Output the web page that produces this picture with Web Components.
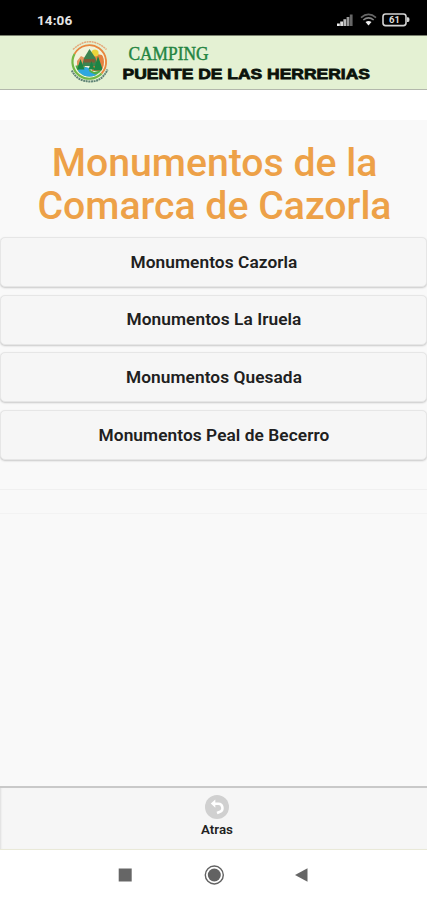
<!DOCTYPE html>
<html lang="es">
<head>
<meta charset="utf-8">
<meta name="viewport" content="width=device-width, initial-scale=1">
<title>Monumentos de la Comarca de Cazorla</title>
<style>
  html, body {
    margin: 0;
    height: 100%;
    background: #fff;
    font-family: Roboto, "Liberation Sans", sans-serif;
  }
</style>
</head>
<body>
<camping-app>
  <status-bar slot="top" time="14:06" battery="61"></status-bar>
  <brand-header slot="top"></brand-header>
  <page-title>Monumentos de la Comarca de Cazorla</page-title>
  <menu-list>
    <menu-button>Monumentos Cazorla</menu-button>
    <menu-button>Monumentos La Iruela</menu-button>
    <menu-button>Monumentos Quesada</menu-button>
    <menu-button>Monumentos Peal de Becerro</menu-button>
  </menu-list>
  <back-bar slot="bottom">Atras</back-bar>
  <system-nav slot="bottom"></system-nav>
</camping-app>

<script>
class CampingApp extends HTMLElement {
  constructor() {
    super();
    this.attachShadow({ mode: 'open' });
    this.shadowRoot.innerHTML = `
      <style>
        :host {
          display: flex;
          flex-direction: column;
          height: 100vh;
          overflow: hidden;
        }
        main {
          flex: 1;
          margin-top: 30px;
          background: #f9f9f9;
        }
        .strip {
          height: 23px;
          margin-top: 29px;
          border-top: 1px solid #f0f0f0;
          border-bottom: 1px solid #f3f3f3;
        }
      </style>
      <slot name="top"></slot>
      <main>
        <slot></slot>
        <div class="strip"></div>
      </main>
      <slot name="bottom"></slot>
    `;
  }
}

class StatusBar extends HTMLElement {
  connectedCallback() {
    this.attachShadow({ mode: 'open' });
    this.shadowRoot.innerHTML = `
      <style>
        :host {
          display: flex;
          justify-content: space-between;
          align-items: center;
          flex: none;
          box-sizing: border-box;
          height: 35px;
          padding: 4px 17px 0 37px;
          background: #000;
          color: #e4e4e4;
        }
        .time {
          font-size: 13.5px;
          font-weight: 700;
          letter-spacing: 0.1px;
        }
        .icons {
          display: flex;
          align-items: center;
        }
        .signal { margin-right: 7px; }
        .wifi { margin-right: 5px; }
      </style>
      <span class="time">${this.getAttribute('time')}</span>
      <div class="icons">
        <svg class="signal" width="16" height="12" viewBox="0 0 16 12">
          <path d="M0 9.5h2.8V12H0z" fill="#eee"/>
          <path d="M3.2 7.5H6V12H3.2z" fill="#ddd"/>
          <path d="M6.4 5.2h2.8V12H6.4z" fill="#bbb"/>
          <path d="M9.6 3h2.8v9H9.6z" fill="#999"/>
          <path d="M12.8.5h2.8V12h-2.8z" fill="#666"/>
        </svg>
        <svg class="wifi" width="17" height="13" viewBox="0 0 17 13" fill="none">
          <path d="M1 4.6Q8.5-1.8 16 4.6" stroke="#666" stroke-width="1.7"/>
          <path d="M3.3 7Q8.5 2.7 13.7 7" stroke="#858585" stroke-width="1.6"/>
          <path d="M5.5 9.1Q8.5 6.7 11.5 9.1L8.5 12.5z" fill="#eee"/>
        </svg>
        <svg width="28" height="14" viewBox="0 0 28 14">
          <rect x="1" y="1" width="23" height="11.6" rx="2.6" fill="none" stroke="#d4d4d4" stroke-width="1.6"/>
          <path d="M25 4.3h1q1.5 0 1.5 2.4T26 9.1h-1z" fill="#d4d4d4"/>
          <text x="12.5" y="10.1" text-anchor="middle" font-size="9.5" font-weight="700" fill="#ddd">${this.getAttribute('battery')}</text>
        </svg>
      </div>
    `;
  }
}

class BrandHeader extends HTMLElement {
  constructor() {
    super();
    this.attachShadow({ mode: 'open' });
    this.shadowRoot.innerHTML = `
      <style>
        :host {
          display: flex;
          flex: none;
          box-sizing: border-box;
          height: 55px;
          padding-left: 69px;
          background: #e4f1d3;
          border-top: 1px solid #787f6d;
          border-bottom: 1px solid #b3b8ac;
        }
        .logo { margin-top: 4px; }
        .name { margin-left: 9px; }
      </style>
      <svg class="logo" width="42" height="44" viewBox="0 0 42 44">
        <defs>
          <clipPath id="scene"><circle cx="20.5" cy="22" r="14.5"/></clipPath>
        </defs>
        <!-- dashed arcs stand for the tiny lettering around the badge -->
        <path d="M4 9.5Q20.5-6 37.500 9.500" fill="none" stroke="#e5a87a" stroke-width="1.5" stroke-dasharray="2 .6"/>
        <path d="M2.8 30.5Q8 41 20.5 41.5T38.5 29.5" fill="none" stroke="#5f8375" stroke-width="2" stroke-dasharray="2 .6"/>
        <circle cx="20.5" cy="21.5" r="16.6" fill="#f1f3da"/>
        <path d="M5.500 14A16.800 16.800 0 1 1 32.500 33.500" fill="none" stroke="#e8873f" stroke-width="1.900"/>
        <path d="M5.500 14A16.800 16.800 0 0 0 32.500 33.500" fill="none" stroke="#73b846" stroke-width="2.200"/>
        <g clip-path="url(#scene)">
          <path d="M23 17l5-3 5 1 4 4v12H23z" fill="#e4823f"/>
          <path d="M8 21l4-5 4 2v10H8z" fill="#e3965c"/>
          <circle cx="26" cy="13" r="3.600" fill="#ecd53c"/>
          <path d="M15 18l5.500-9 6 9 2 8H13z" fill="#3c8450"/>
          <path d="M15 19h11v3.500H15z" fill="#805c36"/>
          <path d="M5 26q8-2 13 2l7 4 12-3v10H5z" fill="#52ae49"/>
          <path d="M12 28q9-2 8 1.500t9 5.500l-3 4H12q-8-6 0-11z" fill="#2fa7e0"/>
          <path d="M11.500 19L8 29.500h7.500zM29 16l-4.500 14.500h9.500zM22.500 21l-3 8.500h6z" fill="#1c8444"/>
        </g>
      </svg>
      <svg class="name" width="256" height="52" viewBox="120 36 256 52">
        <text x="128.5" y="60" font-family="Liberation Serif" font-size="17.8" fill="#238441" stroke="#238441" stroke-width=".4" textLength="80" lengthAdjust="spacingAndGlyphs">CAMPING</text>
        <text x="122.5" y="79" font-family="Liberation Sans" font-size="15.5" font-weight="700" fill="#0b120a" stroke="#0b120a" stroke-width=".8" textLength="247.5" lengthAdjust="spacingAndGlyphs">PUENTE DE LAS HERRERIAS</text>
      </svg>
    `;
  }
}

class PageTitle extends HTMLElement {
  constructor() {
    super();
    this.attachShadow({ mode: 'open' });
    this.shadowRoot.innerHTML = `
      <style>
        :host { display: block; }
        h1 {
          margin: 0;
          padding: 22px 19px 9px 21px;
          color: #eda148;
          font-size: 39.2px;
          font-weight: 500;
          line-height: 43px;
          text-align: center;
        }
      </style>
      <h1><slot></slot></h1>
    `;
  }
}

class MenuList extends HTMLElement {
  constructor() {
    super();
    this.attachShadow({ mode: 'open' });
    this.shadowRoot.innerHTML = `
      <style>
        :host {
          display: flex;
          flex-direction: column;
          gap: 7.7px;
        }
      </style>
      <slot></slot>
    `;
  }
}

class MenuButton extends HTMLElement {
  constructor() {
    super();
    this.attachShadow({ mode: 'open' });
    this.shadowRoot.innerHTML = `
      <style>
        :host { display: flex; }
        button {
          flex: 1;
          height: 50px;
          padding: 0 0 1px 1px;
          border: 1px solid #e6e6e6;
          border-radius: 5px;
          background: #f6f6f6;
          box-shadow: 0 1px 2px rgba(0, 0, 0, 0.2);
          color: #202020;
          font: 600 17.3px Roboto, "Liberation Sans", sans-serif;
          letter-spacing: 0.07px;
        }
      </style>
      <button><slot></slot></button>
    `;
  }
}

class BackBar extends HTMLElement {
  constructor() {
    super();
    this.attachShadow({ mode: 'open' });
    this.shadowRoot.innerHTML = `
      <style>
        :host {
          display: flex;
          flex-direction: column;
          align-items: center;
          flex: none;
          box-sizing: border-box;
          height: 64px;
          padding: 7px 0 0 7px;
          border-top: 2px solid #c9c9c9;
          border-bottom: 1px solid #e9e9d8;
          background: #f6f6f6;
          box-shadow: inset 2px 0 2px -1px #ddd;
          color: #222;
          font-size: 13.3px;
          font-weight: 600;
          line-height: 16px;
        }
        svg { margin-bottom: 3px; }
      </style>
      <svg width="24" height="24" viewBox="0 0 24 24">
        <circle cx="12" cy="12" r="12" fill="#d0d0d0"/>
        <path d="M9 8.8h4a4.2 4.2 0 0 1 1.5 8.2l-2.5 1" fill="none" stroke="#fff" stroke-width="2.6"/>
        <path d="M5.8 8.5l4.5-4v8.2z" fill="#fff"/>
      </svg>
      <slot></slot>
    `;
  }
}

class SystemNav extends HTMLElement {
  constructor() {
    super();
    this.attachShadow({ mode: 'open' });
    this.shadowRoot.innerHTML = `
      <style>
        :host {
          display: flex;
          justify-content: space-between;
          align-items: center;
          flex: none;
          box-sizing: border-box;
          height: 50px;
          padding: 0 118px;
          background: #fff;
        }
      </style>
      <svg width="14" height="14" viewBox="0 0 14 14"><path d="M.7.5h13v13H.7z" fill="#666"/></svg>
      <svg width="20" height="20" viewBox="0 0 20 20">
        <circle cx="10.3" cy="10" r="9" fill="none" stroke="#626262" stroke-width="1.4"/>
        <circle cx="10.3" cy="10" r="6.5" fill="#626262"/>
      </svg>
      <svg width="14" height="14" viewBox="0 0 14 14"><path d="M0 7L12.5.3v13.4z" fill="#666"/></svg>
    `;
  }
}

customElements.define('camping-app', CampingApp);
customElements.define('status-bar', StatusBar);
customElements.define('brand-header', BrandHeader);
customElements.define('page-title', PageTitle);
customElements.define('menu-list', MenuList);
customElements.define('menu-button', MenuButton);
customElements.define('back-bar', BackBar);
customElements.define('system-nav', SystemNav);
</script>
</body>
</html>
